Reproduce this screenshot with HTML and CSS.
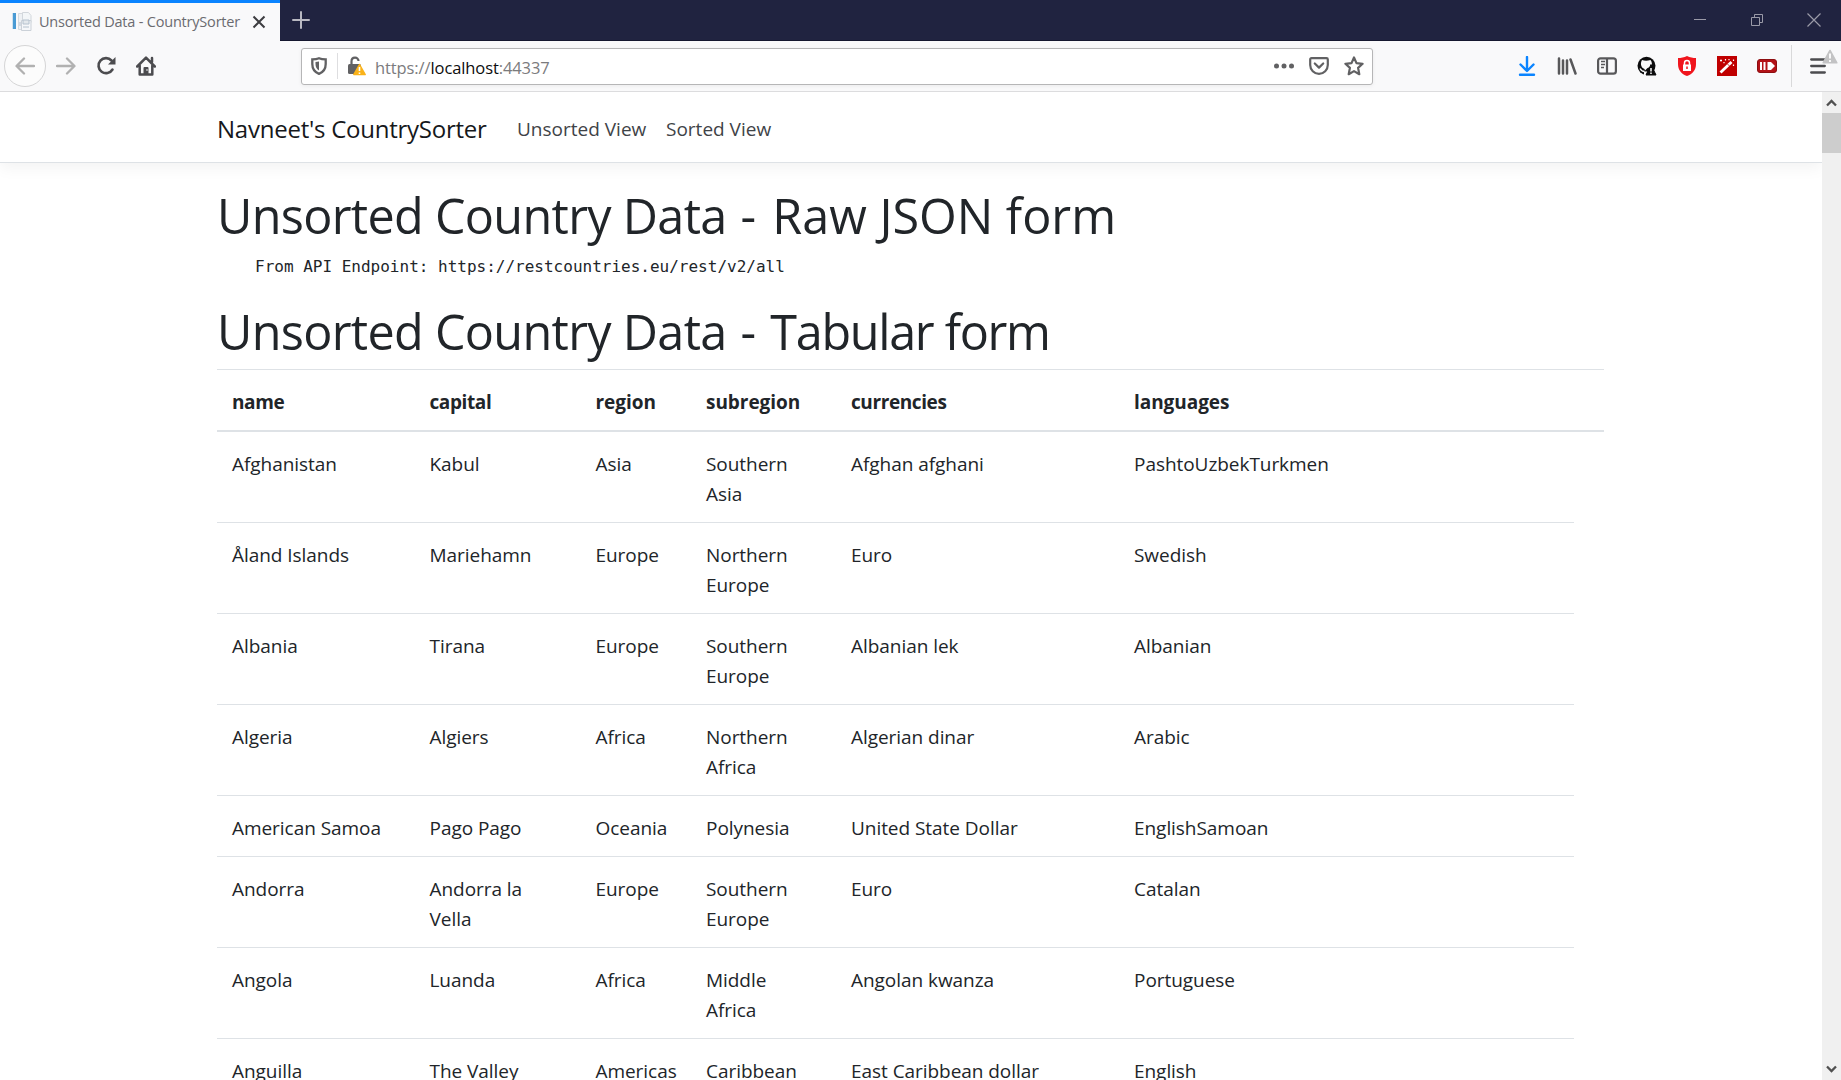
FILE: index.html
```html
<!DOCTYPE html>
<html lang="en">
<head>
<meta charset="utf-8">
<title>Unsorted Data - CountrySorter</title>
<link rel="stylesheet" href="styles.css">
</head>
<body>
<div class="tabbar">
  <div class="tab">
    <svg class="favicon" width="20" height="20" viewBox="0 0 20 20"><rect x="1" y="1" width="3" height="16" fill="#4a9bd4"/><rect x="0" y="1" width="1" height="16" fill="#cfe3f0"/><path d="M6.500 1.500h8v16h-8z" fill="#eef1f4" stroke="#d6dade"/><path d="M10.500 .5h6l2.500 3v7h-8.500z" fill="#f3f6f8" stroke="#d2d7dc"/><path d="M9.500 8.500h9.500v10H9.500z" fill="#f5f7f9" stroke="#cbd1d8"/><path d="M11 8h6v4h-6zM8 10v4M11 15h6" fill="#e3e8ec" stroke="#b5c2ce"/></svg>
    <span class="tab-title">Unsorted Data - CountrySorter</span>
    <svg width="14" height="14" viewBox="0 0 14 14" stroke="#3d3d40" stroke-width="2" fill="none"><path d="M1.500 1.500l11 11M12.500 1.500l-11 11"/></svg>
  </div>
  <svg class="newtab" width="18" height="18" viewBox="0 0 18 18" stroke="#b9b9c2" stroke-width="2" stroke-linecap="round"><path d="M9 1v16M1 9h16"/></svg>
  <div class="window-buttons">
    <svg width="14" height="14" viewBox="0 0 14 14" stroke="#9a9aa8" fill="none"><path d="M1 6.500h12"/></svg>
    <svg width="14" height="14" viewBox="0 0 14 14" stroke="#9a9aa8" fill="none"><path d="M1.500 4.500h8v8h-8zM4.500 4.500v-3h8v8h-3"/></svg>
    <svg width="14" height="14" viewBox="0 0 14 14" stroke="#9a9aa8" stroke-width="1.200" fill="none"><path d="M.5 .5l13 13M13.500 .5l-13 13"/></svg>
  </div>
</div>

<div class="toolbar">
  <div class="nav-buttons">
    <span class="back"><svg width="20" height="18" viewBox="0 0 20 18" fill="none" stroke="#b1b1b1" stroke-width="2.300" stroke-linecap="round" stroke-linejoin="round"><path d="M19 9H2M9 1.500L1.500 9 9 16.500"/></svg></span>
    <span class="tool"><svg width="20" height="18" viewBox="0 0 20 18" fill="none" stroke="#b1b1b1" stroke-width="2.300" stroke-linecap="round" stroke-linejoin="round"><path d="M1 9h17M11 1.500L18.500 9 11 16.500"/></svg></span>
    <span class="tool"><svg width="20" height="20" viewBox="0 0 20 20"><path d="M16.500 13.500A7.500 7.500 0 1 1 15.500 4.500" fill="none" stroke="#4c4c4f" stroke-width="2.600" stroke-linecap="round"/><path d="M19.500 1v7.500H12z" fill="#4c4c4f"/></svg></span>
    <span class="tool"><svg width="20" height="20" viewBox="0 0 20 20"><path d="M1.200 10.500L10 1.700l8.800 8.800M3.700 9.500V18.500h12.600V9.500M16 2v4" fill="none" stroke="#4c4c4f" stroke-width="2.500" stroke-linecap="round" stroke-linejoin="round"/><path d="M7.500 18.500v-6.500q0-1 1-1h3q1 0 1 1v6.500z" fill="#4c4c4f"/><circle cx="11" cy="14" r=".8" fill="#fff"/></svg></span>
  </div>
  <div class="urlbar">
    <svg class="shield" width="16" height="18" viewBox="0 0 16 18"><path d="M8 1.200c2 .8 4 1.100 6.700 1.200v4.600c0 5-2.700 8.300-6.700 9.800-4-1.500-6.700-4.800-6.700-9.800V2.400C4 2.300 6 2 8 1.200z" fill="none" stroke="#616163" stroke-width="2.300"/><path d="M8 4.500v9C5.500 12 4.500 10 4.500 7V5.100z" fill="#616163"/></svg>
    <span class="url-sep"></span>
    <svg class="lock" width="19" height="20" viewBox="0 0 19 20"><path d="M4.500 9V5.500C4.500 .5 11.500 .5 11.500 5" fill="none" stroke="#616163" stroke-width="2.200"/><rect x="1" y="8" width="13" height="10" rx="1.500" fill="#616163"/><path d="M12.500 8.500l5.700 10H6.800z" fill="#fab219" stroke="#fab219" stroke-width="1.500" stroke-linejoin="round"/><path d="M12.500 11v4M12.500 16.500v1.500" stroke="#fff" stroke-width="1.600"/></svg>
    <span class="url">https://<b>localhost</b>:44337</span>
    <svg class="dots" width="20" height="6" viewBox="0 0 20 6" fill="#616163"><circle cx="2.500" cy="3" r="2.500"/><circle cx="10" cy="3" r="2.500"/><circle cx="17.500" cy="3" r="2.500"/></svg>
    <svg class="pocket" width="20" height="18" viewBox="0 0 20 18" fill="none" stroke="#616163" stroke-width="2.200" stroke-linecap="round" stroke-linejoin="round"><path d="M2.500 1.200h15q1.300 0 1.300 1.300v5.500a8.800 8.800 0 0 1-17.600 0V2.500q0-1.300 1.300-1.300zM5.800 6.500L10 10.600l4.200-4.100"/></svg>
    <svg class="star" width="20" height="20" viewBox="0 0 20 20" fill="none" stroke="#616163" stroke-width="2.200" stroke-linejoin="round"><path d="M10 1.500l2.500 5.600 6.100.7-4.500 4.100 1.200 6.300-5.300-3.100-5.300 3.100 1.200-6.300L1.400 7.800l6.100-.7z"/></svg>
  </div>
  <div class="ext">
    <span class="tool"><svg width="18" height="20" viewBox="0 0 18 20" fill="none" stroke="#0a84ff" stroke-width="2.400" stroke-linecap="round" stroke-linejoin="round"><path d="M9 1v13M2.500 8.500L9 15l6.500-6.500M2 18.800h14"/></svg></span>
    <span class="tool"><svg width="20" height="18" viewBox="0 0 20 18" fill="none" stroke="#58585a" stroke-width="2.500" stroke-linecap="round"><path d="M2 1.500v15M6 3.500v13M10 3.500v13M13.500 2.500l5 14"/></svg></span>
    <span class="tool"><svg width="20" height="18" viewBox="0 0 20 18" fill="none" stroke="#58585a" stroke-width="2.200"><rect x="1.100" y="1.300" width="17.800" height="15.400" rx="2.500"/><path d="M10 1v16"/><path d="M4 4.500h4M4 7.500h4M4 10.500h3" stroke-width="1.300"/></svg></span>
    <span class="tool"><svg width="20" height="20" viewBox="0 0 20 20"><circle cx="9.500" cy="9.800" r="9" fill="#0c0c0d"/><path d="M5 4c2.500 1 5.500 1 8.500 0 1.500 2 2 4.500.5 6.500L10.500 12 8 14.500 7.500 13C3.500 11.500 3.200 7 5 4z" fill="#f9f9fa"/><path d="M7 19v-3.500h3.500L9 19z" fill="#f9f9fa"/><path d="M3 12.500q1.500 3 4.500 3" fill="none" stroke="#f9f9fa" stroke-width="1.300"/><path d="M14 8.500l5 10.500H9z" fill="#0c0c0d" stroke="#0c0c0d" stroke-linejoin="round"/><path d="M14 12v3.500M14 16.500v1.500" stroke="#fff" stroke-width="1.500"/></svg></span>
    <span class="tool"><svg width="20" height="20" viewBox="0 0 20 20"><path d="M10 0c3 1.600 6 2 9 2v6c0 6-3.500 10-9 12C4.500 18 1 14 1 8V2c3 0 6-.4 9-2z" fill="#f0151d"/><rect x="6" y="8.500" width="8" height="6.500" fill="#fff"/><path d="M7.500 9V7a2.500 2.500 0 0 1 5 0v2" fill="none" stroke="#fff" stroke-width="1.500"/><path d="M10 10.500v2.500" stroke="#f0151d" stroke-width="1.500"/></svg></span>
    <span class="tool"><svg width="20" height="20" viewBox="0 0 20 20"><rect width="20" height="20" fill="#c00000"/><path d="M3.500 16.500L14.500 6" stroke="#fff" stroke-width="2.800"/><path d="M10.500 8l2 2" stroke="#c00000" stroke-width=".8"/><path d="M4 3.500v2M3 4.500h2M8.500 3v1.500M7 6v1.200M12 3v1.200M16.500 3.500v1.500M16.500 8.500v1.500" stroke="#fff" stroke-width="1.200"/></svg></span>
    <span class="tool"><svg width="20" height="14" viewBox="0 0 20 14"><rect x=".5" y=".5" width="19" height="13" rx="2.500" fill="#b31217" stroke="#8d0e10"/><path d="M3 3h2v8H3zM6.500 3h2v8h-2zM10.500 3h3.500l4 4-4 4h-3.500z" fill="#fff"/></svg></span>
    <span class="ext-sep"></span>
    <span class="menu"><svg width="16" height="16" viewBox="0 0 16 16" stroke="#4c4c4f" stroke-width="2.300" stroke-linecap="round"><path d="M1.200 1.500h13.600M1.200 8h13.600M1.200 14.500h13.600"/></svg><svg class="alert" width="16" height="15" viewBox="0 0 16 15"><path d="M8 1.500l6.800 12.300H1.200z" fill="#c3c3c4" stroke="#c3c3c4" stroke-width="1.600" stroke-linejoin="round"/><path d="M8 4.500v5M8 11v2" stroke="#fff" stroke-width="1.800"/></svg></span>
  </div>
</div>

<div class="viewport">
  <main class="page">
    <nav class="navbar">
      <span class="brand">Navneet's CountrySorter</span>
      <span class="link">Unsorted View</span>
      <span class="link">Sorted View</span>
    </nav>
    <div class="content">
      <h1>Unsorted Country Data <span class="dash">-</span> <span class="form">Raw JSON form</span></h1>
      <pre>From API Endpoint: https://restcountries.eu/rest/v2/all</pre>
      <h1 class="table-heading">Unsorted Country Data <span class="dash">-</span> <span class="form">Tabular form</span></h1>
      <table>
        <colgroup><col class="c-name"><col class="c-capital"><col class="c-region"><col class="c-sub"><col class="c-cur"><col class="c-lang"><col class="c-end"></colgroup>
        <thead><tr><th class="tight">name</th><th class="tight">capital</th><th>region</th><th>subregion</th><th class="tight">currencies</th><th>languages</th><th></th></tr></thead>
        <tbody>
          <tr><td>Afghanistan</td><td>Kabul</td><td>Asia</td><td>Southern<br>Asia</td><td>Afghan afghani</td><td>PashtoUzbekTurkmen</td></tr>
          <tr><td>Åland Islands</td><td>Mariehamn</td><td>Europe</td><td>Northern<br>Europe</td><td>Euro</td><td>Swedish</td></tr>
          <tr><td>Albania</td><td>Tirana</td><td>Europe</td><td>Southern<br>Europe</td><td>Albanian lek</td><td>Albanian</td></tr>
          <tr><td>Algeria</td><td>Algiers</td><td>Africa</td><td>Northern<br>Africa</td><td>Algerian dinar</td><td>Arabic</td></tr>
          <tr><td>American Samoa</td><td>Pago Pago</td><td>Oceania</td><td>Polynesia</td><td>United State Dollar</td><td>EnglishSamoan</td></tr>
          <tr><td>Andorra</td><td>Andorra la<br>Vella</td><td>Europe</td><td>Southern<br>Europe</td><td>Euro</td><td>Catalan</td></tr>
          <tr><td>Angola</td><td>Luanda</td><td>Africa</td><td>Middle<br>Africa</td><td>Angolan kwanza</td><td>Portuguese</td></tr>
          <tr><td>Anguilla</td><td>The Valley</td><td>Americas</td><td>Caribbean</td><td>East Caribbean dollar</td><td>English</td></tr>
        </tbody>
      </table>
    </div>
  </main>
  <div class="scrollbar">
    <svg width="19" height="21" viewBox="0 0 19 21" fill="none" stroke="#505050" stroke-width="2.300"><path d="M5 13.500l4.500-4.500 4.500 4.500"/></svg>
    <div class="thumb"></div>
    <svg class="down" width="19" height="21" viewBox="0 0 19 21" fill="none" stroke="#505050" stroke-width="2.300"><path d="M5 7.500l4.500 4.500L14 7.500"/></svg>
  </div>
</div>
</body>
</html>
```
FILE: styles.css
```css
* { box-sizing: border-box; }
body {
  margin: 0;
  height: 1080px;
  overflow: hidden;
  display: flex;
  flex-direction: column;
  background: #fff;
  color: #212529;
  font-family: "Open Sans", "Noto Sans", sans-serif;
  font-size: 19px;
  line-height: 30px;
}
svg { display: block; flex: none; }

/* window title bar */
.tabbar { flex: none; height: 41px; display: flex; align-items: center; background: #202340; border-bottom: 1px solid #15172f; }
.tab { width: 280px; height: 41px; display: flex; align-items: center; align-self: flex-start; padding: 0 14px 0 12px; background: #f9f9fa; border-top: 3px solid #0a84ff; }
.favicon { margin-right: 7px; }
.tab-title { flex: 1; font-size: 14.500px; color: #6b6b70; white-space: nowrap; letter-spacing: -.2px; }
.newtab { margin-left: 12px; }
.window-buttons { display: flex; gap: 43px; margin-left: auto; margin-right: 20px; }

/* browser toolbar */
.toolbar { flex: none; height: 51px; display: flex; align-items: center; background: #f9f9fa; border-bottom: 1px solid #dcdcde; }
.nav-buttons, .ext { display: flex; align-items: center; }
.nav-buttons { margin-left: 4px; }
.back { width: 42px; height: 42px; display: grid; place-items: center; border: 1px solid #d5d5d6; border-radius: 50%; background: #fcfcfc; }
.tool { width: 40px; height: 40px; display: grid; place-items: center; }
.urlbar { width: 1072px; height: 37px; margin-left: 135px; display: flex; align-items: center; background: #fff; border: 1px solid #b6b6b7; border-radius: 3px; box-shadow: 0 1px 4px rgba(0,0,0,.06); }
.shield { margin-left: 9px; }
.url-sep { width: 1px; height: 26px; margin: 0 9px 0 10px; background: #dedee0; }
.url { flex: 1; margin-left: 9px; padding-top: 3px; font-size: 16.500px; color: #7b7b7d; letter-spacing: -.1px; }
.url b { font-weight: 400; color: #0c0c0d; }
.pocket { margin-left: 15px; }
.star { margin: 0 8px 0 15px; }
.ext { margin-left: auto; }
.ext-sep { width: 1px; height: 42px; margin-left: 4px; background: #d9d9da; }
.menu { position: relative; width: 49px; padding-left: 18px; }
.alert { position: absolute; left: 30px; top: -9px; }

/* web page */
.viewport { flex: 1; min-height: 0; display: flex; }
.page { flex: 1; min-width: 0; overflow: hidden; }
.navbar { height: 71px; padding: 0 217px; display: flex; align-items: center; border-bottom: 1px solid #dee2e6; box-shadow: 0 5px 15px rgba(0,0,0,.05); white-space: nowrap; }
.brand { width: 300px; padding-top: 3px; font-size: 24px; letter-spacing: -.24px; color: #16181b; }
.link { width: 149px; color: #3f4347; padding-top: 3px; }
.content { padding: 23px 0 0 217px; white-space: nowrap; }
h1 { margin: 0; height: 60px; font-size: 48.500px; line-height: 59px; font-weight: 400; letter-spacing: -.67px; }
.dash { margin: 0 5px 0 2px; }
.form { letter-spacing: 0; }
.table-heading { margin-bottom: 7px; }
.table-heading .form { margin-left: -2px; letter-spacing: -1.300px; }
pre { margin: 10px 0 24px 38px; font: 16px/22px "DejaVu Sans Mono", monospace; }
table { width: 1387px; table-layout: fixed; border-spacing: 0; }
.c-name { width: 197.500px; }
.c-capital { width: 166px; }
.c-region { width: 110.500px; }
.c-sub { width: 145px; }
.c-cur { width: 283px; }
.c-lang { width: 455px; }
.c-end { width: 30px; }
th, td { padding: 17px 0 13px 15px; text-align: left; vertical-align: top; letter-spacing: -.05px; }
th { height: 63px; font-weight: 700; border-top: 1px solid #dee2e6; border-bottom: 2px solid #dee2e6; }
th.tight { letter-spacing: -.4px; }
td { border-top: 1px solid #dee2e6; }
tbody tr:first-child td { border-top: 0; }

.scrollbar { width: 19px; display: flex; flex-direction: column; background: #f0f0f0; }
.thumb { height: 40px; background: #cdcdcd; }
.down { margin-top: auto; }
```
